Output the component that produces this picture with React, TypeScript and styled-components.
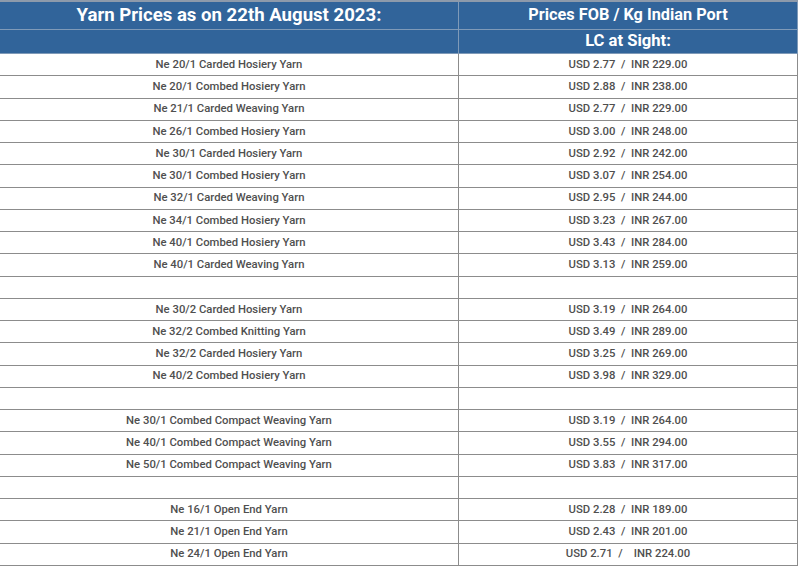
import { Component } from 'react';
import styled, { createGlobalStyle } from 'styled-components';

const GlobalStyle = createGlobalStyle`
  html, body {
    margin: 0;
    padding: 0;
    background: #ffffff;
  }
`;

const Container = styled.div`
  width: 800px;
  height: 567px;
  overflow: hidden;
  background: #ffffff;
`;

const Table = styled.table`
  width: 799px;
  margin-left: -1px;
  border-collapse: collapse;
  table-layout: fixed;
  font-family: Roboto, "Liberation Sans", sans-serif;
  border-top: 2px solid #8d9aab;
`;

const HeadCell = styled.th<{ $tall?: boolean; $size: number }>`
  height: ${(p) => (p.$tall ? '27px' : '23px')};
  padding: 0;
  background: #31649a;
  color: #ffffff;
  font-weight: 700;
  font-size: ${(p) => p.$size}px;
  text-align: center;
  vertical-align: middle;
  border: 1px solid #7f9ab8;
  line-height: 1;
`;

const Row = styled.tr`
  height: 22.25px;
`;

const Cell = styled.td`
  padding: 0;
  text-align: center;
  vertical-align: middle;
  color: #4f4f4f;
  font-size: 11.3px;
  font-weight: 500;
  border: 1px solid #8c8c8c;
  line-height: 1;
  white-space: pre;
`;

type Yarn = { name: string; usd: string; inr: string; gap?: string } | null;

const rows: Yarn[] = [
  { name: 'Ne 20/1 Carded Hosiery Yarn', usd: '2.77', inr: '229.00' },
  { name: 'Ne 20/1 Combed Hosiery Yarn', usd: '2.88', inr: '238.00' },
  { name: 'Ne 21/1 Carded Weaving Yarn', usd: '2.77', inr: '229.00' },
  { name: 'Ne 26/1 Combed Hosiery Yarn', usd: '3.00', inr: '248.00' },
  { name: 'Ne 30/1 Carded Hosiery Yarn', usd: '2.92', inr: '242.00' },
  { name: 'Ne 30/1 Combed Hosiery Yarn', usd: '3.07', inr: '254.00' },
  { name: 'Ne 32/1 Carded Weaving Yarn', usd: '2.95', inr: '244.00' },
  { name: 'Ne 34/1 Combed Hosiery Yarn', usd: '3.23', inr: '267.00' },
  { name: 'Ne 40/1 Combed Hosiery Yarn', usd: '3.43', inr: '284.00' },
  { name: 'Ne 40/1 Carded Weaving Yarn', usd: '3.13', inr: '259.00' },
  null,
  { name: 'Ne 30/2 Carded Hosiery Yarn', usd: '3.19', inr: '264.00' },
  { name: 'Ne 32/2 Combed Knitting Yarn', usd: '3.49', inr: '289.00' },
  { name: 'Ne 32/2 Carded Hosiery Yarn', usd: '3.25', inr: '269.00' },
  { name: 'Ne 40/2 Combed Hosiery Yarn', usd: '3.98', inr: '329.00' },
  null,
  { name: 'Ne 30/1 Combed Compact Weaving Yarn', usd: '3.19', inr: '264.00' },
  { name: 'Ne 40/1 Combed Compact Weaving Yarn', usd: '3.55', inr: '294.00' },
  { name: 'Ne 50/1 Combed Compact Weaving Yarn', usd: '3.83', inr: '317.00' },
  null,
  { name: 'Ne 16/1 Open End Yarn', usd: '2.28', inr: '189.00' },
  { name: 'Ne 21/1 Open End Yarn', usd: '2.43', inr: '201.00' },
  { name: 'Ne 24/1 Open End Yarn', usd: '2.71', inr: '224.00', gap: '    ' },
];

class App extends Component {
  render() {
    return (
      <Container>
        <GlobalStyle />
        <Table>
          <colgroup>
            <col style={{ width: 459 }} />
            <col />
          </colgroup>
          <thead>
            <tr>
              <HeadCell $tall $size={18.6}>Yarn Prices as on 22th August 2023:</HeadCell>
              <HeadCell $tall $size={16.3}>Prices FOB / Kg Indian Port</HeadCell>
            </tr>
            <tr>
              <HeadCell $size={16.6} />
              <HeadCell $size={16.6}>LC at Sight:</HeadCell>
            </tr>
          </thead>
          <tbody>
            {rows.map((r, i) => (
              <Row key={i}>
                <Cell>{r ? r.name : ''}</Cell>
                <Cell>{r ? `USD ${r.usd}  /${r.gap ?? '  '}INR ${r.inr}` : ''}</Cell>
              </Row>
            ))}
          </tbody>
        </Table>
      </Container>
    );
  }
}

export default App;
